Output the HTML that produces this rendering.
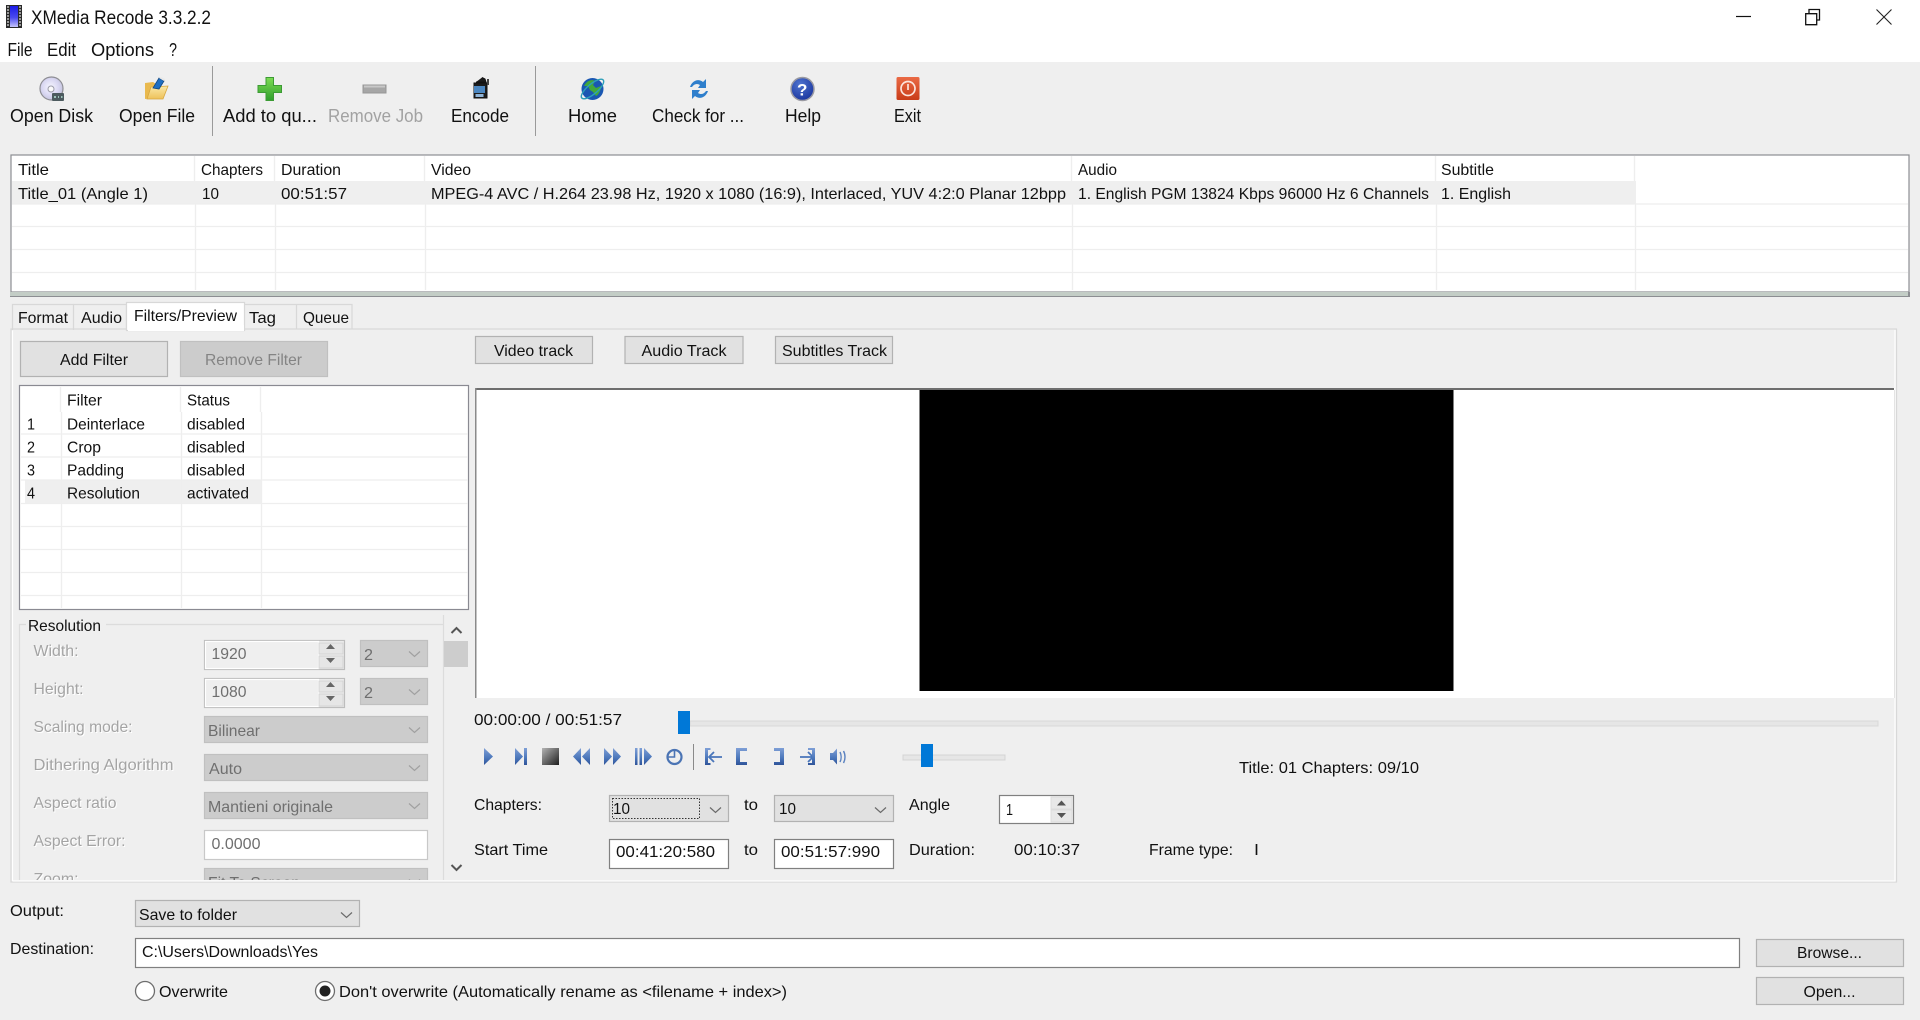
<!DOCTYPE html>
<html lang="en"><head><meta charset="utf-8"><title>XMedia Recode 3.3.2.2</title>
<style>
html,body{margin:0;padding:0;background:#efefef;width:1920px;height:1020px;overflow:hidden}
svg{display:block}
text{font-family:"Liberation Sans",sans-serif;font-size:16px;fill:#111;white-space:pre}
.tb{font-size:18px}.m{font-size:18px}
.dis{fill:#a4a4a4}.g{fill:#6f6f6f}
.cr{shape-rendering:crispEdges}
.btn{fill:#e1e1e1;stroke:#b2b2b2;stroke-width:1.2}
.cb{fill:#e1e1e1;stroke:#b2b2b2;stroke-width:1.2}
.cd{fill:#cccccc;stroke:#c0c0c0;stroke-width:1.2}
.inp{fill:#fff;stroke:#808080;stroke-width:1.2}
.chev{fill:none;stroke:#6a6a6a;stroke-width:1.2}
.chd{fill:none;stroke:#a0a0a0;stroke-width:1.2}
.lines{fill:none;stroke:#eeeeee;stroke-width:1.3}
.tr{fill:url(#bl)}
</style></head><body>
<svg xmlns="http://www.w3.org/2000/svg" width="1920" height="1020" viewBox="0 0 1920 1020">
<defs>
<linearGradient id="bl" x1="0" y1="0" x2="0" y2="1"><stop offset="0" stop-color="#7f9fd6"/><stop offset=".6" stop-color="#4a76ba"/><stop offset="1" stop-color="#2f5499"/></linearGradient>
<linearGradient id="st" x1="0" y1="0" x2="1" y2="1"><stop offset="0" stop-color="#b4b4b4"/><stop offset="1" stop-color="#1f1f1f"/></linearGradient>
<linearGradient id="film" x1="0" y1="0" x2="0" y2="1"><stop offset="0" stop-color="#1c1ce8"/><stop offset=".55" stop-color="#4a4af0"/><stop offset="1" stop-color="#c4c4fb"/></linearGradient>
<linearGradient id="gr" x1="0" y1="0" x2="0" y2="1"><stop offset="0" stop-color="#7ddc54"/><stop offset="1" stop-color="#2f9e2c"/></linearGradient>
<linearGradient id="fo" x1="0" y1="0" x2="0" y2="1"><stop offset="0" stop-color="#fbe9a8"/><stop offset="1" stop-color="#eec15a"/></linearGradient>
<linearGradient id="re" x1="0" y1="0" x2="0" y2="1"><stop offset="0" stop-color="#ea6a45"/><stop offset="1" stop-color="#c93c18"/></linearGradient>
<radialGradient id="di" cx=".45" cy=".45" r=".6"><stop offset="0" stop-color="#f6f6ff"/><stop offset=".6" stop-color="#d9d7f2"/><stop offset="1" stop-color="#c0c0d8"/></radialGradient>
<radialGradient id="he" cx=".4" cy=".3" r=".8"><stop offset="0" stop-color="#4f74cf"/><stop offset="1" stop-color="#16309a"/></radialGradient>
<clipPath id="paneclip"><rect x="12" y="612" width="462" height="268"/></clipPath>
</defs>

<!-- title + menu -->
<rect class="cr" x="0" y="0" width="1920" height="62" fill="#fff"/>
<rect x="6" y="5" width="16" height="23" fill="#2a2a2a"/>
<rect x="10" y="6" width="8" height="21" fill="url(#film)"/>
<path d="M7 7h2M7 10h2M7 13h2M7 16h2M7 19h2M7 22h2M7 25h2M19 7h2M19 10h2M19 13h2M19 16h2M19 19h2M19 22h2M19 25h2" stroke="#ddd" stroke-width="1.2"/>
<text x="31" y="24" style="font-size:19px" textLength="180" lengthAdjust="spacingAndGlyphs">XMedia Recode 3.3.2.2</text>
<text class="m" x="7.500" y="56" textLength="25" lengthAdjust="spacingAndGlyphs">File</text>
<text class="m" x="47" y="56" textLength="29" lengthAdjust="spacingAndGlyphs">Edit</text>
<text class="m" x="91" y="56" textLength="63" lengthAdjust="spacingAndGlyphs">Options</text>
<text class="m" x="169" y="56" textLength="8" lengthAdjust="spacingAndGlyphs">?</text>
<path d="M1736 16.5h15" stroke="#111" stroke-width="1.2"/>
<path d="M1805.7 13.7h11v11h-11zM1809 13.5v-4h10.5v10.5h-3" fill="none" stroke="#111" stroke-width="1.3"/>
<path d="M1876.5 9.5l15 15M1891.5 9.5l-15 15" stroke="#222" stroke-width="1.1"/>

<!-- toolbar icons -->
<circle cx="51.5" cy="88.5" r="11.5" fill="url(#di)" stroke="#8e8e94" stroke-width="1.2"/>
<circle cx="51" cy="89" r="3" fill="#fafafa" stroke="#9a9aa8"/>
<rect x="52" y="93" width="12" height="8" rx="1" fill="#4c5a5e"/>
<path d="M54 97h2M58 97h1M61 97h1.5" stroke="#cfe" stroke-width="1.3"/>

<path d="M145 83l8 -1 3 2 5 0 -1 13 -15 2z" fill="#e9b94e"/>
<path d="M147 99l4 -12 17 -1 -5 13z" fill="url(#fo)" stroke="#d8a73f" stroke-width=".8"/>
<path d="M153 88l6 -10 5 3 -5 8z" fill="#1f6fc2" stroke="#12467e" stroke-width=".8"/>
<path d="M159 78l2 -1 4 2 -1 2z" fill="#e8e8e8"/>

<path class="cr" d="M212.5 66v70M535.5 66v70" stroke="#9a9a9a" stroke-width="1"/>

<path d="M266 77.5h7.5v8h8v7h-8v8h-7.5v-8h-8v-7h8z" fill="url(#gr)" stroke="#3c9b34" stroke-width="1"/>
<rect x="363" y="85" width="23" height="8" fill="#a6a6a6" stroke="#979797"/>
<rect x="364" y="85.5" width="21" height="2" fill="#c8c8c8"/>
<path d="M476 82h10l-1-3-3-1.500M474 83h13v15h-13z" fill="#1b1b1b" stroke="#111"/>
<rect x="474" y="86" width="11" height="7" fill="#4b86c0"/>
<rect x="475.500" y="94" width="8" height="3" fill="#8fb4d8"/>
<path d="M488 79v6" stroke="#444" stroke-width="2"/>

<circle cx="592.500" cy="89" r="11" fill="#1a57b2"/>
<path d="M584 86c3-6 8-7 11-5l-2 4 3 3 5-2c0 5-3 9-5 10l-3-4-3-2-2-4z" fill="#42a83a"/>
<ellipse cx="592.500" cy="89" rx="14" ry="5" transform="rotate(-40 592.500 89)" fill="none" stroke="#2c9fb8" stroke-width="1.4"/>

<path d="M690 87c2-6 8-9 13-5l3-3v9h-8l2-3c-3-2-6-1-8 2z" fill="#2f7fcc"/>
<path d="M708 91c-2 6-8 9-13 5l-3 3v-9h8l-2 3c3 2 6 1 8-2z" fill="#2f7fcc"/>

<circle cx="802.500" cy="89" r="11.500" fill="url(#he)" stroke="#9a9aa2" stroke-width="1.5"/>
<text x="797" y="95.500" style="font-size:17px;font-weight:bold;fill:#fff">?</text>

<rect x="896.500" y="77" width="23" height="23" rx="1.500" fill="url(#re)"/>
<circle cx="908" cy="88.500" r="7" fill="none" stroke="#fbe4dc" stroke-width="1.700"/>
<path d="M908 84v6" stroke="#fbe4dc" stroke-width="1.700"/>

<text class="tb" x="10" y="122" textLength="83" lengthAdjust="spacingAndGlyphs">Open Disk</text>
<text class="tb" x="119" y="122" textLength="76" lengthAdjust="spacingAndGlyphs">Open File</text>
<text class="tb" x="223" y="122" textLength="94" lengthAdjust="spacingAndGlyphs">Add to qu...</text>
<text class="tb" x="328" y="122" textLength="95" lengthAdjust="spacingAndGlyphs" style="fill:#a2a2a2">Remove Job</text>
<text class="tb" x="451" y="122" textLength="58" lengthAdjust="spacingAndGlyphs">Encode</text>
<text class="tb" x="568" y="122" textLength="49" lengthAdjust="spacingAndGlyphs">Home</text>
<text class="tb" x="652" y="122" textLength="92" lengthAdjust="spacingAndGlyphs">Check for ...</text>
<text class="tb" x="785" y="122" textLength="36" lengthAdjust="spacingAndGlyphs">Help</text>
<text class="tb" x="894" y="122" textLength="27" lengthAdjust="spacingAndGlyphs">Exit</text>

<!-- title table -->
<rect x="11" y="155" width="1898" height="137" fill="#fff" stroke="#8c8e92" stroke-width="1.200"/>
<rect class="cr" x="12" y="181" width="1624" height="23" fill="#efefef"/>
<path class="lines" d="M12 204h1896M12 226.500h1896M12 249.500h1896M12 272.500h1896"/>
<path class="lines" d="M194.500 156v25M274.500 156v25M424.500 156v25M1071.500 156v25M1435.500 156v25M1634.500 156v25M195.500 204v86M275.500 204v86M425.500 204v86M1072.500 204v86M1436.500 204v86M1635.500 204v86"/>
<rect class="cr" x="10" y="292" width="1900" height="4" fill="#c3cdc6"/>
<rect class="cr" x="10" y="296" width="1900" height="1" fill="#8c8e92"/>
<rect class="cr" x="1908" y="292" width="2" height="5" fill="#8c8e92"/>

<text x="18" y="175" textLength="31" lengthAdjust="spacingAndGlyphs">Title</text>
<text x="201" y="175" textLength="62" lengthAdjust="spacingAndGlyphs">Chapters</text>
<text x="281" y="175" textLength="60" lengthAdjust="spacingAndGlyphs">Duration</text>
<text x="431" y="175" textLength="40" lengthAdjust="spacingAndGlyphs">Video</text>
<text x="1078" y="175" textLength="39" lengthAdjust="spacingAndGlyphs">Audio</text>
<text x="1441" y="175" textLength="53" lengthAdjust="spacingAndGlyphs">Subtitle</text>
<text x="18" y="199" textLength="130" lengthAdjust="spacingAndGlyphs">Title_01 (Angle 1)</text>
<text x="202" y="199" textLength="17" lengthAdjust="spacingAndGlyphs">10</text>
<text x="281" y="199" textLength="66" lengthAdjust="spacingAndGlyphs">00:51:57</text>
<text x="431" y="199" textLength="635" lengthAdjust="spacingAndGlyphs">MPEG-4 AVC / H.264 23.98 Hz, 1920 x 1080 (16:9), Interlaced, YUV 4:2:0 Planar 12bpp</text>
<text x="1078" y="199" textLength="351" lengthAdjust="spacingAndGlyphs">1. English PGM 13824 Kbps 96000 Hz 6 Channels</text>
<text x="1441" y="199" textLength="70" lengthAdjust="spacingAndGlyphs">1. English</text>

<!-- pane + tabs -->
<rect x="11" y="329" width="1885.500" height="553" fill="#efefef" stroke="#d8d8d8" stroke-width="1.200"/>
<path d="M12.500 881V330.500M12.500 881H1895V330" fill="none" stroke="#fff" stroke-width="1.200"/>
<path d="M12.500 330V304.500H73.500V330M126.500 330V304.500M244.500 304.500H296.500V329M296.500 304.500H352V329" fill="none" stroke="#d8d8d8" stroke-width="1.200"/>
<path d="M73.500 304.500H126.500" fill="none" stroke="#d8d8d8" stroke-width="1.200"/>
<rect x="126.500" y="302.500" width="118" height="28" fill="#fff" stroke="#d8d8d8" stroke-width="1.200"/>
<rect class="cr" x="128" y="325" width="116" height="6" fill="#fff"/>
<text x="18" y="323" textLength="50" lengthAdjust="spacingAndGlyphs">Format</text>
<text x="81" y="323" textLength="41" lengthAdjust="spacingAndGlyphs">Audio</text>
<text x="134" y="321" textLength="103" lengthAdjust="spacingAndGlyphs">Filters/Preview</text>
<text x="249" y="323" textLength="27" lengthAdjust="spacingAndGlyphs">Tag</text>
<text x="303" y="323" textLength="46" lengthAdjust="spacingAndGlyphs">Queue</text>

<rect class="btn" x="20.500" y="341.500" width="147" height="35"/>
<text x="60" y="365" textLength="68" lengthAdjust="spacingAndGlyphs">Add Filter</text>
<rect x="180.500" y="341.500" width="147" height="35" fill="#cccccc" stroke="#c0c0c0" stroke-width="1.200"/>
<text x="205" y="365" textLength="97" lengthAdjust="spacingAndGlyphs" style="fill:#848484">Remove Filter</text>

<!-- filter list -->
<rect x="19.500" y="385.500" width="449" height="224" fill="#fff" stroke="#8a8a92" stroke-width="1.200"/>
<rect class="cr" x="25" y="480" width="236" height="23" fill="#efefef"/>
<path class="lines" d="M21 434h447M21 457h447M21 480h447M21 503.500h447M21 526.500h447M21 549.500h447M21 572.500h447M21 595.500h447"/>
<path class="lines" d="M60.500 387v25M180.500 387v25M260.500 387v25M61.500 412v196M181.500 412v196M261.500 412v196"/>
<text x="67" y="405.500" textLength="35" lengthAdjust="spacingAndGlyphs">Filter</text>
<text x="187" y="405.500" textLength="43" lengthAdjust="spacingAndGlyphs">Status</text>
<text x="27" y="429.500" textLength="8" lengthAdjust="spacingAndGlyphs">1</text>
<text x="67" y="429.500" textLength="78" lengthAdjust="spacingAndGlyphs">Deinterlace</text>
<text x="187" y="429.500" textLength="58" lengthAdjust="spacingAndGlyphs">disabled</text>
<text x="27" y="452.500" textLength="8" lengthAdjust="spacingAndGlyphs">2</text>
<text x="67" y="452.500" textLength="34" lengthAdjust="spacingAndGlyphs">Crop</text>
<text x="187" y="452.500" textLength="58" lengthAdjust="spacingAndGlyphs">disabled</text>
<text x="27" y="475.500" textLength="8" lengthAdjust="spacingAndGlyphs">3</text>
<text x="67" y="475.500" textLength="57" lengthAdjust="spacingAndGlyphs">Padding</text>
<text x="187" y="475.500" textLength="58" lengthAdjust="spacingAndGlyphs">disabled</text>
<text x="27" y="498.500" textLength="8" lengthAdjust="spacingAndGlyphs">4</text>
<text x="67" y="498.500" textLength="73" lengthAdjust="spacingAndGlyphs">Resolution</text>
<text x="187" y="498.500" textLength="62" lengthAdjust="spacingAndGlyphs">activated</text>

<!-- resolution group -->
<g clip-path="url(#paneclip)">
<path d="M19.500 880V624.500H26M106 624.500H443.500V615M443.500 624V880" fill="none" stroke="#dcdcdc" stroke-width="1.200"/>
<text x="28" y="631" textLength="73" lengthAdjust="spacingAndGlyphs">Resolution</text>
<g style="filter:drop-shadow(1px 1px 0 #fff)">
<text class="dis" x="33.500" y="656" textLength="45" lengthAdjust="spacingAndGlyphs">Width:</text>
<text class="dis" x="33.500" y="694" textLength="50" lengthAdjust="spacingAndGlyphs">Height:</text>
<text class="dis" x="33.500" y="732" textLength="99" lengthAdjust="spacingAndGlyphs">Scaling mode:</text>
<text class="dis" x="33.500" y="770" textLength="140" lengthAdjust="spacingAndGlyphs">Dithering Algorithm</text>
<text class="dis" x="33.500" y="808" textLength="83" lengthAdjust="spacingAndGlyphs">Aspect ratio</text>
<text class="dis" x="33.500" y="846" textLength="92" lengthAdjust="spacingAndGlyphs">Aspect Error:</text>
<text class="dis" x="33.500" y="884" textLength="45" lengthAdjust="spacingAndGlyphs">Zoom:</text>
</g>

<rect x="204.500" y="640.500" width="140" height="29" fill="#efefef" stroke="#bdbdbd" stroke-width="1.200"/>
<rect x="205.500" y="641.500" width="113" height="27" fill="#efefef" stroke="#fff" stroke-width="1.200"/>
<rect x="319" y="643" width="24" height="11" fill="#e6e6e6" stroke="#d4d4d4"/><rect x="319" y="656" width="24" height="12" fill="#e6e6e6" stroke="#d4d4d4"/>
<path d="M326 649h9l-4.500-5zM326 658h9l-4.500 5z" fill="#666"/>
<text class="g" x="211.500" y="659" textLength="35" lengthAdjust="spacingAndGlyphs">1920</text>
<rect class="cd" x="360.500" y="640.500" width="67" height="26"/>
<text class="g" x="364" y="660" textLength="9" lengthAdjust="spacingAndGlyphs">2</text>
<path class="chd" d="M409 651.500l5.500 5 5.500-5"/>

<rect x="204.500" y="678.500" width="140" height="29" fill="#efefef" stroke="#bdbdbd" stroke-width="1.200"/>
<rect x="205.500" y="679.500" width="113" height="27" fill="#efefef" stroke="#fff" stroke-width="1.200"/>
<rect x="319" y="681" width="24" height="11" fill="#e6e6e6" stroke="#d4d4d4"/><rect x="319" y="694" width="24" height="12" fill="#e6e6e6" stroke="#d4d4d4"/>
<path d="M326 687h9l-4.500-5zM326 696h9l-4.500 5z" fill="#666"/>
<text class="g" x="211.500" y="697" textLength="35" lengthAdjust="spacingAndGlyphs">1080</text>
<rect class="cd" x="360.500" y="678.500" width="67" height="26"/>
<text class="g" x="364" y="698" textLength="9" lengthAdjust="spacingAndGlyphs">2</text>
<path class="chd" d="M409 689.500l5.500 5 5.500-5"/>

<rect class="cd" x="204.500" y="716.500" width="223" height="26"/>
<text class="g" x="208" y="736" textLength="52" lengthAdjust="spacingAndGlyphs">Bilinear</text>
<path class="chd" d="M409 727.500l5.500 5 5.500-5"/>
<rect class="cd" x="204.500" y="754.500" width="223" height="26"/>
<text class="g" x="209" y="774" textLength="33" lengthAdjust="spacingAndGlyphs">Auto</text>
<path class="chd" d="M409 765.500l5.500 5 5.500-5"/>
<rect class="cd" x="204.500" y="792.500" width="223" height="26"/>
<text class="g" x="208" y="812" textLength="125" lengthAdjust="spacingAndGlyphs">Mantieni originale</text>
<path class="chd" d="M409 803.500l5.500 5 5.500-5"/>
<rect x="204.500" y="830.500" width="223" height="29" fill="#fff" stroke="#c8c8c8" stroke-width="1.200"/>
<text class="g" x="211.500" y="849" textLength="49" lengthAdjust="spacingAndGlyphs">0.0000</text>
<rect class="cd" x="204.500" y="868.500" width="223" height="26"/>
<text class="g" x="208" y="888" textLength="92" lengthAdjust="spacingAndGlyphs">Fit To Screen</text>
<path class="chd" d="M409 879.500l5.500 5 5.500-5"/>
</g>
<rect class="cr" x="444" y="641" width="24" height="26" fill="#cdcdcd"/>
<path d="M451.500 633l5-5 5 5M451.500 865l5 5 5-5" fill="none" stroke="#555" stroke-width="2"/>

<!-- right side buttons -->
<rect class="btn" x="475.500" y="336.500" width="117" height="27"/>
<text x="494" y="356" textLength="79" lengthAdjust="spacingAndGlyphs">Video track</text>
<rect class="btn" x="625" y="336.500" width="118" height="27"/>
<text x="641.500" y="356" textLength="85" lengthAdjust="spacingAndGlyphs">Audio Track</text>
<rect class="btn" x="775.500" y="336.500" width="117" height="27"/>
<text x="782" y="356" textLength="105" lengthAdjust="spacingAndGlyphs">Subtitles Track</text>

<!-- preview -->
<rect class="cr" x="475" y="388" width="1420" height="310" fill="#fff"/>
<rect class="cr" x="475" y="388" width="1419" height="2" fill="#6e6e6e"/>
<rect class="cr" x="475" y="388" width="1.500" height="310" fill="#8a8a8a"/>
<rect class="cr" x="1894" y="390" width="1" height="308" fill="#e4e4e4"/>
<rect class="cr" x="919.500" y="390" width="534" height="301" fill="#000"/>

<!-- playback -->
<text x="474" y="725" textLength="148" lengthAdjust="spacingAndGlyphs">00:00:00 / 00:51:57</text>
<rect x="690" y="721" width="1188" height="5" fill="#e6e6e6" stroke="#d8d8d8"/>
<rect class="cr" x="678" y="711" width="12" height="23" fill="#0078d7"/>
<path class="tr" d="M484 748l9 8.500-9 8.500z"/>
<path class="tr" d="M515 748l8 8.500-8 8.500zM524 748h3v17h-3z"/>
<rect x="542" y="748" width="17" height="17" fill="url(#st)"/>
<path class="tr" d="M581 748v17l-8-8.500zM590 748v17l-8-8.500z"/>
<path class="tr" d="M604 748v17l8-8.500zM613 748v17l8-8.500z"/>
<path class="tr" d="M635 748h2.500v17h-2.500zM639.500 748h2.500v17h-2.500zM644 748l8 8.500-8 8.500z"/>
<circle cx="674.500" cy="757" r="7" fill="none" stroke="#4b74b4" stroke-width="2.200"/>
<path d="M674.500 751v6h-6" fill="none" stroke="#4b74b4" stroke-width="1.600"/>
<path class="cr" d="M693.500 744v26" stroke="#8a8a8a"/>
<path class="tr" d="M705 748h5.500v2h-2.500v13h2.500v2h-5.500z"/>
<path d="M722 757h-12M714 752l-5 5 5 5" fill="none" stroke="#4a76ba" stroke-width="1.800"/>
<path class="tr" d="M736 748h11v3h-7v11h7v3h-11z"/>
<path class="tr" d="M784 748h-10v3h6v11h-6v3h10z"/>
<path d="M800 757h12M808 752l5 5-5 5" fill="none" stroke="#4a76ba" stroke-width="1.800"/>
<path class="tr" d="M815 748h-7v2h4v13h-4v2h7z"/>
<path class="tr" d="M830 753h3l4-4.500v16l-4-4.500h-3z"/>
<path d="M840 752c1.500 3 1.500 7 0 10M843.500 751c2 3.500 2 8.500 0 12" fill="none" stroke="#5a82c0" stroke-width="1.400"/>
<rect x="903" y="755" width="102" height="5" fill="#e6e6e6" stroke="#d4d4d4"/>
<rect class="cr" x="921" y="744" width="12" height="23" fill="#0078d7"/>
<text x="1239" y="773" textLength="180" lengthAdjust="spacingAndGlyphs">Title: 01 Chapters: 09/10</text>

<text x="474" y="810" textLength="68" lengthAdjust="spacingAndGlyphs">Chapters:</text>
<rect class="cb" x="609.500" y="795.500" width="119" height="26"/>
<rect x="612.500" y="798.500" width="87" height="20" fill="none" stroke="#333" stroke-width="1" stroke-dasharray="1.500 1.500"/>
<text x="613" y="814" textLength="17" lengthAdjust="spacingAndGlyphs">10</text>
<path class="chev" d="M710 807.500l5.500 5 5.500-5"/>
<text x="744" y="810" textLength="14" lengthAdjust="spacingAndGlyphs">to</text>
<rect class="cb" x="774.500" y="795.500" width="119" height="26"/>
<text x="779" y="814" textLength="17" lengthAdjust="spacingAndGlyphs">10</text>
<path class="chev" d="M875 807.500l5.500 5 5.500-5"/>
<text x="909" y="810" textLength="41" lengthAdjust="spacingAndGlyphs">Angle</text>
<rect class="inp" x="999.500" y="795.500" width="74" height="28"/>
<rect x="1051" y="797" width="21" height="12" fill="#e8e8e8" stroke="#dcdcdc"/><rect x="1051" y="810" width="21" height="12" fill="#e8e8e8" stroke="#dcdcdc"/>
<path d="M1057 805.500h9l-4.500-5zM1057 813h9l-4.500 5z" fill="#555"/>
<text x="1006" y="815" textLength="7" lengthAdjust="spacingAndGlyphs">1</text>

<text x="474" y="855" textLength="74" lengthAdjust="spacingAndGlyphs">Start Time</text>
<rect class="inp" x="609.500" y="839.500" width="119" height="29"/>
<text x="616" y="857" textLength="99" lengthAdjust="spacingAndGlyphs">00:41:20:580</text>
<text x="744" y="855" textLength="14" lengthAdjust="spacingAndGlyphs">to</text>
<rect class="inp" x="774.500" y="839.500" width="119" height="29"/>
<text x="781" y="857" textLength="99" lengthAdjust="spacingAndGlyphs">00:51:57:990</text>
<text x="909" y="855" textLength="66" lengthAdjust="spacingAndGlyphs">Duration:</text>
<text x="1014" y="855" textLength="66" lengthAdjust="spacingAndGlyphs">00:10:37</text>
<text x="1149" y="855" textLength="84" lengthAdjust="spacingAndGlyphs">Frame type:</text>
<text x="1254" y="855" textLength="5" lengthAdjust="spacingAndGlyphs">I</text>

<!-- bottom -->
<text x="10" y="916" textLength="54" lengthAdjust="spacingAndGlyphs">Output:</text>
<rect class="cb" x="135.500" y="900.500" width="224" height="26"/>
<text x="139" y="920" textLength="98" lengthAdjust="spacingAndGlyphs">Save to folder</text>
<path class="chev" d="M341 912.500l5.500 5 5.500-5"/>
<text x="10" y="954" textLength="84" lengthAdjust="spacingAndGlyphs">Destination:</text>
<rect class="inp" x="135.500" y="938.500" width="1604" height="29"/>
<text x="142" y="957" textLength="176" lengthAdjust="spacingAndGlyphs">C:\Users\Downloads\Yes</text>
<circle cx="145" cy="991" r="9.500" fill="#fff" stroke="#6e6e6e" stroke-width="1.300"/>
<text x="159" y="997" textLength="69" lengthAdjust="spacingAndGlyphs">Overwrite</text>
<circle cx="325" cy="991" r="9.500" fill="#fff" stroke="#6e6e6e" stroke-width="1.300"/>
<circle cx="325" cy="991" r="5.500" fill="#222"/>
<text x="339" y="997" textLength="448" lengthAdjust="spacingAndGlyphs">Don't overwrite (Automatically rename as &lt;filename + index&gt;)</text>
<rect class="btn" x="1756.500" y="939.500" width="147" height="27"/>
<text x="1797" y="958" textLength="65" lengthAdjust="spacingAndGlyphs">Browse...</text>
<rect class="btn" x="1756.500" y="977.500" width="147" height="27"/>
<text x="1803.500" y="997" textLength="52" lengthAdjust="spacingAndGlyphs">Open...</text>
</svg>
</body></html>
